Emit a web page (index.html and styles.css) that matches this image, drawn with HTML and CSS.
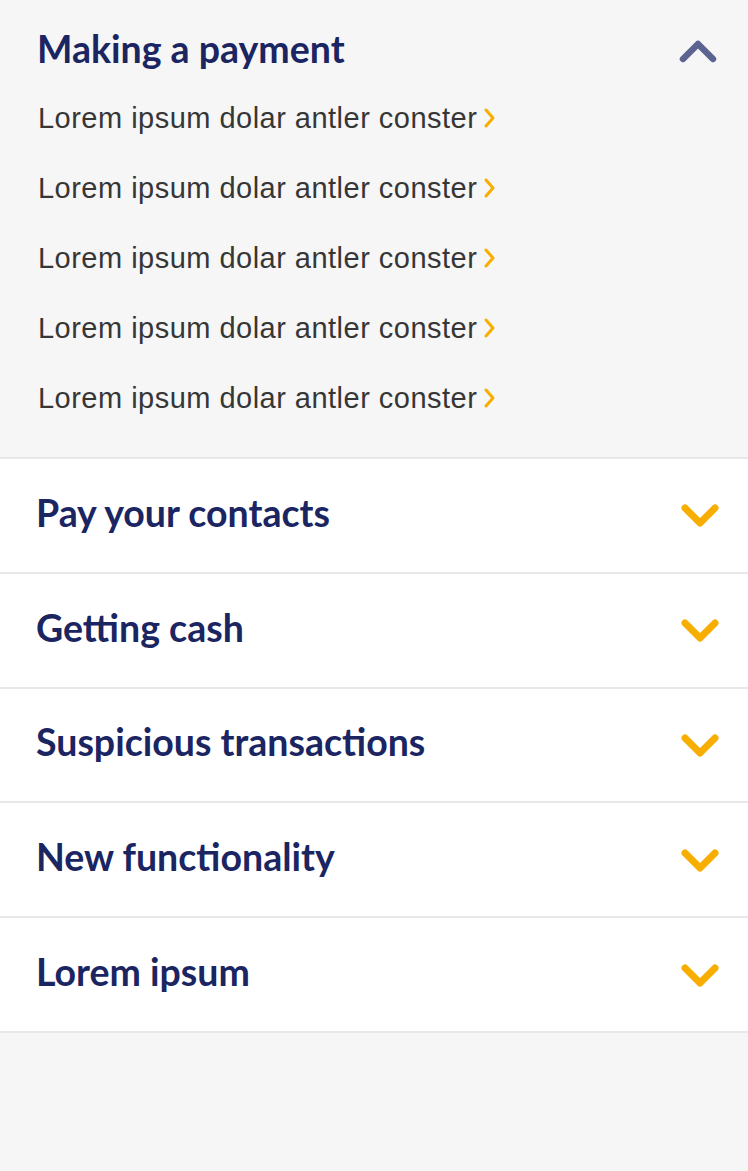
FILE: index.html
```html
<!DOCTYPE html>
<html>
<head>
<meta charset="utf-8">
<link rel="stylesheet" href="styles.css">
</head>
<body>
<div class="faq">
  <section class="group open">
    <div class="group-head">
      <h2 class="group-title">Making a payment</h2>
      <svg class="chev chev-up" width="44" height="30" viewBox="0 0 44 30"><polyline points="7,23 22,8 37,23" /></svg>
    </div>
    <ul class="links">
      <li><a class="link">Lorem ipsum dolar antler conster<svg class="arrow" width="14" height="22" viewBox="0 0 14 22"><polyline points="3,3 10,11 3,19"/></svg></a></li>
      <li><a class="link">Lorem ipsum dolar antler conster<svg class="arrow" width="14" height="22" viewBox="0 0 14 22"><polyline points="3,3 10,11 3,19"/></svg></a></li>
      <li><a class="link">Lorem ipsum dolar antler conster<svg class="arrow" width="14" height="22" viewBox="0 0 14 22"><polyline points="3,3 10,11 3,19"/></svg></a></li>
      <li><a class="link">Lorem ipsum dolar antler conster<svg class="arrow" width="14" height="22" viewBox="0 0 14 22"><polyline points="3,3 10,11 3,19"/></svg></a></li>
      <li><a class="link">Lorem ipsum dolar antler conster<svg class="arrow" width="14" height="22" viewBox="0 0 14 22"><polyline points="3,3 10,11 3,19"/></svg></a></li>
    </ul>
  </section>
  <section class="group">
    <div class="group-head row">
      <h2 class="group-title">Pay your contacts</h2>
      <svg class="chev chev-down" width="44" height="30" viewBox="0 0 44 30"><polyline points="7,8 22,23 37,8" /></svg>
    </div>
  </section>
  <section class="group">
    <div class="group-head row">
      <h2 class="group-title">Getting cash</h2>
      <svg class="chev chev-down" width="44" height="30" viewBox="0 0 44 30"><polyline points="7,8 22,23 37,8" /></svg>
    </div>
  </section>
  <section class="group">
    <div class="group-head row">
      <h2 class="group-title">Suspicious transactions</h2>
      <svg class="chev chev-down" width="44" height="30" viewBox="0 0 44 30"><polyline points="7,8 22,23 37,8" /></svg>
    </div>
  </section>
  <section class="group">
    <div class="group-head row">
      <h2 class="group-title">New functionality</h2>
      <svg class="chev chev-down" width="44" height="30" viewBox="0 0 44 30"><polyline points="7,8 22,23 37,8" /></svg>
    </div>
  </section>
  <section class="group">
    <div class="group-head row">
      <h2 class="group-title">Lorem ipsum</h2>
      <svg class="chev chev-down" width="44" height="30" viewBox="0 0 44 30"><polyline points="7,8 22,23 37,8" /></svg>
    </div>
  </section>
</div>
</body>
</html>
```
FILE: styles.css
```css
* { box-sizing: border-box; }
html, body {
  margin: 0;
  padding: 0;
  background: #f6f6f6;
}
body {
  width: 748px;
  min-height: 1171px;
}
.faq {
  display: flex;
  flex-direction: column;
}
.group {
  background: #ffffff;
  border-bottom: 2px solid #e8e8e8;
}
.group.open {
  background: #f6f6f6;
  height: 459px;
}
.group-head {
  display: flex;
  align-items: center;
  justify-content: space-between;
  padding: 12px 28px 0 37px;
  height: 84px;
}
.group-head.row {
  height: 112.8px;
  padding: 0 26px 6px 36px;
}
.group-title {
  margin: 0;
  font-family: "Lato", "Liberation Sans", sans-serif;
  font-weight: 700;
  font-size: 37.5px;
  color: #1b2562;
}
.chev polyline {
  fill: none;
  stroke-width: 6.5;
  stroke-linecap: round;
  stroke-linejoin: round;
}
.chev-up {
  margin-top: 6px;
}
.chev-up polyline { stroke: #5b6390; }
.chev-down {
  margin-bottom: -6px;
}
.chev-down polyline { stroke: #f8ae00; stroke-width: 7; }
.links {
  list-style: none;
  margin: -1px 0 0 0;
  padding: 0 0 0 38px;
}
.links li {
  height: 70px;
  display: flex;
  align-items: center;
}
.link {
  display: flex;
  align-items: center;
  font-family: "Liberation Sans", Arial, sans-serif;
  font-size: 29px;
  color: #363636;
  letter-spacing: 0.48px;
}
.arrow {
  margin-left: 6px;
}
.arrow polyline {
  fill: none;
  stroke: #f8ae00;
  stroke-width: 3;
  stroke-linecap: round;
  stroke-linejoin: round;
}
```
